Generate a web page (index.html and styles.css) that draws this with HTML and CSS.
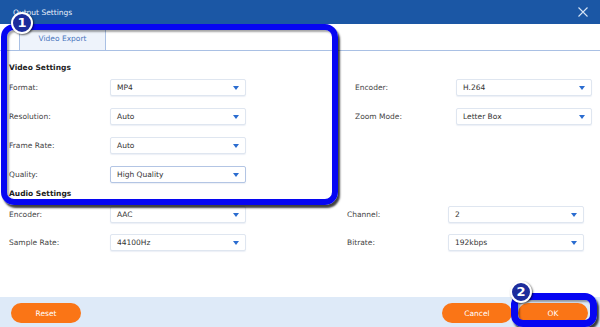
FILE: index.html
```html
<!DOCTYPE html>
<html>
<head>
<meta charset="utf-8">
<link rel="stylesheet" href="styles.css">
</head>
<body>
<div class="window">
  <div class="titlebar">
    <span class="title">Output Settings</span>
    <svg class="close" width="10" height="10" viewBox="0 0 10 10"><path d="M0.5 0.5 L9.5 9.5 M9.5 0.5 L0.5 9.5" stroke="#d6e4f6" stroke-width="1.1" fill="none"/></svg>
  </div>
  <div class="tabbar">
    <div class="tab">Video Export</div>
  </div>
  <div class="main">
    <div class="heading">Video Settings</div>
    <div class="section video">
      <div class="col">
        <div class="row"><span class="label">Format:</span><div class="select"><span>MP4</span><i class="arrow"></i></div></div>
        <div class="row"><span class="label">Resolution:</span><div class="select"><span>Auto</span><i class="arrow"></i></div></div>
        <div class="row"><span class="label">Frame Rate:</span><div class="select"><span>Auto</span><i class="arrow"></i></div></div>
        <div class="row"><span class="label">Quality:</span><div class="select focus"><span>High Quality</span><i class="arrow"></i></div></div>
      </div>
      <div class="col right">
        <div class="row"><span class="label">Encoder:</span><div class="select"><span>H.264</span><i class="arrow"></i></div></div>
        <div class="row"><span class="label">Zoom Mode:</span><div class="select"><span>Letter Box</span><i class="arrow"></i></div></div>
      </div>
    </div>
    <div class="heading audio-head">Audio Settings</div>
    <div class="section audio">
      <div class="col">
        <div class="row"><span class="label">Encoder:</span><div class="select"><span>AAC</span><i class="arrow"></i></div></div>
        <div class="row"><span class="label">Sample Rate:</span><div class="select"><span>44100Hz</span><i class="arrow"></i></div></div>
      </div>
      <div class="col right">
        <div class="row"><span class="label">Channel:</span><div class="select"><span>2</span><i class="arrow"></i></div></div>
        <div class="row"><span class="label">Bitrate:</span><div class="select"><span>192kbps</span><i class="arrow"></i></div></div>
      </div>
    </div>
  </div>
  <div class="footer">
    <button class="btn">Reset</button>
    <div class="spacer"></div>
    <button class="btn">Cancel</button>
    <button class="btn">OK</button>
  </div>

  <div class="mark mark1"></div>
  <div class="badge badge1">1</div>
  <div class="mark mark2"></div>
  <div class="badge badge2">2</div>
</div>
</body>
</html>
```
FILE: styles.css
```css
html, body {
  margin: 0;
  padding: 0;
  background: #ffffff;
}
.window {
  position: relative;
  width: 600px;
  height: 327px;
  overflow: hidden;
  display: flex;
  flex-direction: column;
  font-family: "DejaVu Sans", Verdana, sans-serif;
  font-size: 7.5px;
  color: #3d3d3d;
  background: #ffffff;
}
.titlebar {
  height: 24px;
  flex: none;
  background: #1b57a5;
  display: flex;
  align-items: center;
  padding: 0 12px 0 13px;
}
.title {
  color: #e8f0fb;
  font-size: 7.5px;
  flex: 1;
}
.close {
  display: block;
  margin-right: 0;
}
.tabbar {
  height: 26px;
  flex: none;
  border-bottom: 1px solid #a9c0e4;
  display: flex;
  padding-left: 19px;
}
.tab {
  width: 87px;
  background: #eef3fb;
  border-left: 1px solid #a9c0e4;
  border-right: 1px solid #a9c0e4;
  color: #4a76bd;
  display: flex;
  align-items: center;
  justify-content: center;
  padding-top: 2px;
  box-sizing: border-box;
}
.main {
  flex: 1;
  padding-top: 11px;
}
.heading {
  font-weight: bold;
  color: #222;
  height: 12px;
  line-height: 12px;
  padding-left: 9px;
  margin-bottom: 5px;
}
.audio-head {
  margin-top: 5px;
  margin-bottom: 6px;
}
.section {
  display: flex;
  padding-left: 9px;
}
.col {
  display: flex;
  flex-direction: column;
  gap: 12px;
}
.audio .col {
  gap: 11px;
}
.video .right {
  margin-left: 109px;
}
.audio .right {
  margin-left: 101px;
}
.row {
  display: flex;
  align-items: center;
  height: 17px;
}
.label {
  width: 101px;
  color: #444;
}
.select {
  width: 136px;
  height: 17px;
  box-sizing: border-box;
  border: 1px solid #dfe6f0;
  border-radius: 2px;
  background: #ffffff;
  display: flex;
  align-items: center;
  padding: 0 6px 0 6px;
  color: #333;
  box-shadow: 0 1px 1px rgba(200, 212, 230, 0.35);
}
.select.focus {
  border-color: #b3c5e4;
}
.select span {
  flex: 1;
}
.arrow {
  width: 0;
  height: 0;
  border-left: 3px solid transparent;
  border-right: 3px solid transparent;
  border-top: 4px solid #2a6cd0;
  margin-top: 1px;
}
.footer {
  height: 30px;
  flex: none;
  background: #deeaf8;
  display: flex;
  align-items: flex-start;
  padding: 6px 12px 0 11px;
  box-sizing: border-box;
  gap: 6px;
}
.spacer {
  flex: 1;
}
.btn {
  width: 70px;
  height: 20px;
  border: none;
  border-radius: 10px;
  background: #fa7516;
  color: #fff;
  font-family: "DejaVu Sans", Verdana, sans-serif;
  font-size: 7.5px;
  padding: 0;
}
.mark {
  position: absolute;
  border: 6px solid #0606f2;
  border-radius: 13px;
  box-shadow: 2px 3px 2px rgba(0, 0, 0, 0.75), inset 2px 2px 2px rgba(0, 0, 0, 0.35);
}
.mark1 {
  left: 1px;
  top: 24px;
  width: 325px;
  height: 169px;
}
.mark2 {
  left: 511px;
  top: 293px;
  width: 72px;
  height: 20px;
  border-width: 7px;
  border-radius: 12px;
}
.badge {
  position: absolute;
  width: 18px;
  height: 18px;
  border: 2px solid #ffffff;
  border-radius: 50%;
  background: #1c2c9c;
  color: #fff;
  font-family: "DejaVu Sans", Verdana, sans-serif;
  font-weight: bold;
  font-size: 13px;
  line-height: 18px;
  text-align: center;
  box-shadow: 1px 1px 2px rgba(0, 0, 0, 0.6);
}
.badge1 {
  left: 11px;
  top: 12px;
}
.badge2 {
  left: 510px;
  top: 281px;
}
```
